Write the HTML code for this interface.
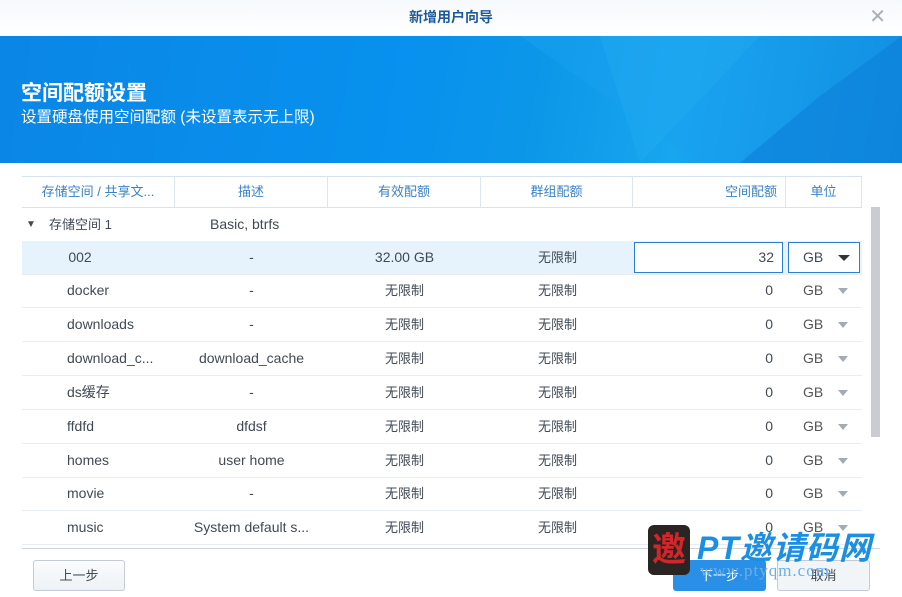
<!DOCTYPE html><html><head><meta charset="utf-8"><style>
*{margin:0;padding:0;box-sizing:border-box}
body{width:902px;height:597px;overflow:hidden;background:#fff;font-family:"Liberation Sans","Noto Sans CJK SC",sans-serif;position:relative;color:#404a55}
.top{position:absolute;left:0;top:0;width:902px;height:36px;background:linear-gradient(#f6f9fc,#fff);text-align:center;line-height:34px;font-size:14px;color:#1e5a9a;font-weight:bold}
.x{position:absolute;right:16px;top:0;color:#a8afb6;font-size:20px;font-weight:normal}
.ban{position:absolute;left:0;top:36px;width:902px;height:127px;background:linear-gradient(100deg,#0a86e6 0%,#0891ee 45%,#0d97e8 60%,#18a6ef 75%,#0a7fd6 100%);overflow:hidden}
.ban h1{position:absolute;left:21px;top:41px;color:#fff;font-size:21px}
.ban p{position:absolute;left:21px;top:69px;color:#fff;font-size:15.5px}
.t{position:absolute;left:22px;top:176px;width:840px;border-top:1px solid #d7e3ee}
.row{position:absolute;left:0;width:840px;height:34px;font-size:14px;border-bottom:1px solid #e8edf1}
.c{position:absolute;top:0;height:100%;line-height:33px;text-align:center}
.h .c{color:#3a82c8;font-size:13px;border-right:1px solid #dde6ee;line-height:30px}
.tri{position:absolute;top:14px;width:0;height:0;border-left:5.5px solid transparent;border-right:5.5px solid transparent;border-top:6px solid #a4acb3}
</style></head><body>
<div class="top">新增用户向导<span class="x">✕</span></div>
<div class="ban">
<svg width="902" height="127" style="position:absolute;left:0;top:0"><polygon points="520,0 902,0 902,127 700,127" fill="#1aa0f0" opacity=".5"/><polygon points="820,60 902,0 902,127 740,127" fill="#0c7ed8" opacity=".6"/><polygon points="600,0 760,0 640,127" fill="#28aef2" opacity=".3"/></svg>
<h1>空间配额设置</h1><p>设置硬盘使用空间配额 (未设置表示无上限)</p></div>
<div class="t">
<div class="row h" style="top:0;height:31px;border-bottom:1px solid #d7e3ee">
<div class="c" style="left:0;width:153px">存储空间 / 共享文...</div><div class="c" style="left:153px;width:153px">描述</div><div class="c" style="left:306px;width:153px">有效配额</div><div class="c" style="left:459px;width:152px">群组配额</div><div class="c" style="left:611px;width:153px;text-align:right;padding-right:8px">空间配额</div><div class="c" style="left:764px;width:76px">单位</div></div>
<div class="row" style="top:31px;border:none"><div class="c" style="left:4px;font-size:10px">▼</div><div class="c" style="left:27px;font-size:13px">存储空间 1</div><div class="c" style="left:188px">Basic, btrfs</div></div>
<div class="row" style="top:64px;background:#e6f3fd"><div class="c" style="left:0;width:116px">002</div><div class="c" style="left:153px;width:153px">-</div><div class="c" style="left:306px;width:153px">32.00 GB</div><div class="c" style="left:459px;width:153px;font-size:13px">无限制</div>
<div style="position:absolute;left:612px;top:1px;width:149px;height:31px;border:1px solid #2f7fd0;background:#fff;text-align:right;padding-right:8px;line-height:29px">32</div>
<div style="position:absolute;left:766px;top:1px;width:72px;height:31px;border:1px solid #2f7fd0;background:#fff;line-height:29px;padding-left:14px">GB<span class="tri" style="right:9px;top:12px;border-top-color:#333;border-left-width:6px;border-right-width:6px"></span></div></div>
</div>
<div id="rows"></div>
<div style="position:absolute;left:871px;top:207px;width:9px;height:230px;background:#c9cdd1"></div>
<div style="position:absolute;left:22px;top:548px;width:858px;border-top:1px solid #cfd5da"></div>
<div style="position:absolute;left:33px;top:560px;width:92px;height:31px;border:1px solid #c3ccd4;border-radius:3px;background:linear-gradient(#fafcfd,#eef2f5);text-align:center;line-height:29px;font-size:13px">上一步</div>
<div style="position:absolute;left:673px;top:560px;width:93px;height:31px;border-radius:3px;background:#2a8fe6;color:#fff;text-align:center;line-height:31px;font-size:13px">下一步</div>
<div style="position:absolute;left:777px;top:560px;width:93px;height:31px;border:1px solid #c3ccd4;border-radius:3px;background:#f2f5f7;text-align:center;line-height:29px;font-size:13px">取消</div>
<div style="position:absolute;left:648px;top:525px;width:42px;height:50px;background:#2a2522;border-radius:6px;color:#d3262a;font-size:34px;font-weight:bold;text-align:center;line-height:50px">邀</div>
<div style="position:absolute;left:697px;top:523px;color:#1d8fe3;font-size:32px;font-weight:bold;font-style:italic;letter-spacing:1px">PT邀请码网</div>
<div style="position:absolute;left:700px;top:561px;color:#6ab0e8;font-size:17px;font-family:'Liberation Serif',serif;letter-spacing:1px">www.ptyqm.com</div>
<script>
var d=[["docker","-"],["downloads","-"],["download_c...","download_cache"],["ds缓存","-"],["ffdfd","dfdsf"],["homes","user home"],["movie","-"],["music","System default s..."]];
var h="";d.forEach(function(r,i){h+='<div class="row" style="left:22px;top:'+(274+i*33.9)+'px"><div class="c" style="left:0;width:136px;text-align:left;padding-left:45px">'+r[0]+'</div><div class="c" style="left:153px;width:153px">'+r[1]+'</div><div class="c" style="left:306px;width:153px;font-size:13px">无限制</div><div class="c" style="left:459px;width:153px;font-size:13px">无限制</div><div class="c" style="left:611px;width:140px;text-align:right">0</div><div class="c" style="left:781px;color:#555">GB</div><span class="tri" style="left:816px"></span></div>'});
document.getElementById("rows").innerHTML=h;
</script>
</body></html>
